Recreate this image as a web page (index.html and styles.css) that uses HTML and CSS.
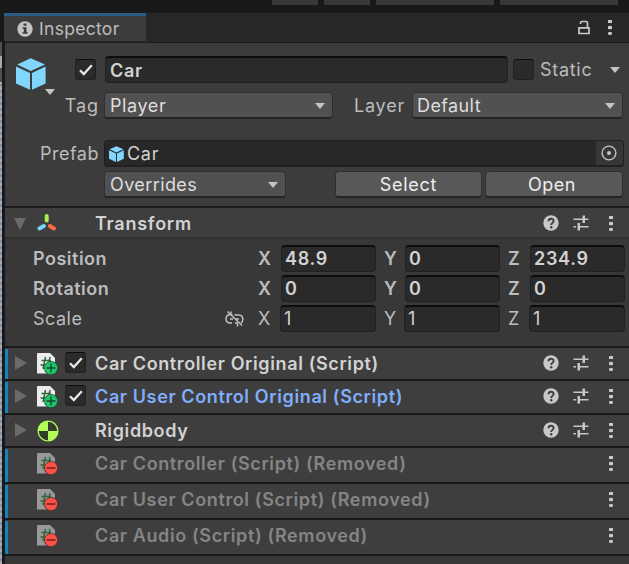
FILE: index.html
```
<!DOCTYPE html>
<html lang="en">
<head>
<meta charset="utf-8">
<title>Inspector</title>
<link rel="stylesheet" href="styles.css">
</head>
<body>
<svg class="defs" aria-hidden="true">
  <defs>
    <symbol id="cube" viewBox="0 0 30 32">
      <path fill="#81d6fd" d="M14.700.3 29 6.500 14.700 13 1.200 6.500z"/>
      <path fill="#81d6fd" d="M0 8.500 14 15V31.800L0 25.500zM29.600 8.500 16 15V31.800L29.600 25.500z"/>
    </symbol>
    <symbol id="dots" viewBox="0 0 4 15"><path fill="#c8c8c8" d="M0 0h4v3H0zM0 6.300Q2 5.300 4 6.300V8.800Q2 9.800 0 8.800zM.5 12h3l.5 1.500-.6 1.500H.6L0 13.500z"/></symbol>
    <symbol id="help" viewBox="0 0 16 16">
      <circle cx="8" cy="8" r="7.700" fill="#c8c8c8"/>
      <path d="M5.500 6.300C5.500 3 10.600 3 10.600 6 10.600 7.900 8.200 7.900 8.200 10" fill="none" stroke="#3e3e3e" stroke-width="1.900"/>
      <circle cx="8.200" cy="12.300" r="1.200" fill="#3e3e3e"/>
    </symbol>
    <symbol id="preset" viewBox="0 0 16 16"><path fill="#c8c8c8" d="M.5 3.500h9V5h-9zM9.500.500h2.500V8H9.500zM12 3.500h3.500V5H12zM.5 11H3v1.500H.5zM4.500 8H7v7.500H4.500zM7 11h8.500v1.500H7z"/></symbol>
    <symbol id="check" viewBox="0 0 14 12"><path d="M1 6.200 4.800 10 12.800 1.200" fill="none" stroke="#e6e6e6" stroke-width="2.300"/></symbol>
    <symbol id="page" viewBox="0 0 21 22">
      <path d="M0 1Q0 0 1 0H13L18 5V20.500H0z" fill="var(--sheet)"/>
      <path d="M8.500 4 6 16M13 4 10.500 16M4.500 7.500H14M3.500 12H14" fill="none" stroke="#33663a" stroke-width="1.500"/>
    </symbol>
  </defs>
</svg>

<div class="window">
  <div class="toolbar"><i></i><i></i><i class="wide"></i><i class="wide"></i></div>
  <div class="scene-edge"></div>
  <main class="inspector">
    <div class="tabbar">
      <div class="tab">
        <svg class="info" viewBox="0 0 16 16"><circle cx="8" cy="8" r="7.700" fill="#c4c4c4"/><path fill="#3c3c3c" d="M6.500 2.500h3v2.300h-3zM5.500 6.200h4v5h1.200v1.600H5.500v-1.600h1.300V7.700H5.500z"/></svg>
        <span>Inspector</span>
      </div>
      <svg class="lock" viewBox="0 0 12 15"><path d="M1 7.800h10v5.700H1zM2.500 4V3Q2.500 1.500 4 1.500H8Q9.500 1.500 9.500 3V8" fill="none" stroke="#c8c8c8" stroke-width="1.700"/></svg>
      <svg class="dots"><use href="#dots"/></svg>
    </div>

    <section class="object">
      <div class="row name-row">
        <div class="object-icon"><svg class="cube"><use href="#cube"/></svg><b class="caret"></b></div>
        <div class="box"><svg><use href="#check"/></svg></div>
        <div class="field name strong">Car</div>
        <div class="box static-box"></div>
        <span class="static">Static</span><b class="caret static-caret"></b>
      </div>
      <div class="row tag-row">
        <span class="label">Tag</span>
        <div class="dropdown tag"><span>Player</span><b class="caret"></b></div>
        <span class="layer-label">Layer</span>
        <div class="dropdown layer"><span>Default</span><b class="caret"></b></div>
      </div>
      <div class="row prefab-row">
        <span class="label">Prefab</span>
        <div class="object-field"><svg class="mini-cube"><use href="#cube"/></svg><span>Car</span>
          <div class="picker"><svg viewBox="0 0 16 16"><circle cx="8" cy="8" r="6.900" fill="none" stroke="#c4c4c4" stroke-width="1.400"/><circle cx="8" cy="8" r="2" fill="#c4c4c4"/></svg></div>
        </div>
      </div>
      <div class="row override-row">
        <div class="dropdown overrides"><span>Overrides</span><b class="caret"></b></div>
        <div class="button select">Select</div>
        <div class="button open">Open</div>
      </div>
    </section>

    <section class="component transform-head">
      <b class="fold down"></b>
      <svg class="axes" viewBox="0 0 20 20"><g fill="none" stroke-width="4" stroke-linecap="round"><path d="M9.700 3V7.500" stroke="#a4f14f"/><path d="M6.800 13 2.500 15.500" stroke="#7bd2fa"/><path d="M12.800 13 17 15.500" stroke="#fb6d42"/></g></svg>
      <h2>Transform</h2>
      <div class="tools"><svg class="help"><use href="#help"/></svg><svg class="preset"><use href="#preset"/></svg><svg class="dots"><use href="#dots"/></svg></div>
    </section>
    <section class="values">
      <div class="vector strong"><span class="prop">Position</span><span class="axis">X</span><div class="field">48.9</div><span class="axis">Y</span><div class="field">0</div><span class="axis">Z</span><div class="field">234.9</div></div>
      <div class="vector strong"><span class="prop">Rotation</span><span class="axis">X</span><div class="field">0</div><span class="axis">Y</span><div class="field">0</div><span class="axis">Z</span><div class="field">0</div></div>
      <div class="vector plain"><span class="prop">Scale</span>
        <svg class="unlink" viewBox="0 0 19 16"><g fill="none" stroke="#c0c0c0" stroke-width="1.500"><path d="M7.500 3.500H5Q1 4 1 8 1 12 5.500 12H7M9.500 4H14Q18 4.500 17.800 8.500 17.600 11 16 12M5 8H8M11 8H14M10 12H13M2.500.500 17 14.500M6 .500V2.500M12.500 13V15.500"/></g></svg>
        <span class="axis">X</span><div class="field">1</div><span class="axis">Y</span><div class="field">1</div><span class="axis">Z</span><div class="field">1</div></div>
    </section>

    <section class="component changed">
      <b class="fold"></b>
      <svg class="script" viewBox="0 0 21 22"><use href="#page"/><circle cx="14" cy="15" r="7" fill="#24553a"/><circle cx="14" cy="15" r="6.200" fill="#1cc86c"/><path d="M9.500 15h9M14 10.500v9" stroke="#154b2b" stroke-width="1.500"/></svg>
      <div class="box"><svg><use href="#check"/></svg></div>
      <h2>Car Controller Original (Script)</h2>
      <div class="tools"><svg class="help"><use href="#help"/></svg><svg class="preset"><use href="#preset"/></svg><svg class="dots"><use href="#dots"/></svg></div>
    </section>
    <section class="component changed user-control">
      <b class="fold"></b>
      <svg class="script" viewBox="0 0 21 22"><use href="#page"/><circle cx="14" cy="15" r="7" fill="#24553a"/><circle cx="14" cy="15" r="6.200" fill="#1cc86c"/><path d="M9.500 15h9M14 10.500v9" stroke="#154b2b" stroke-width="1.500"/></svg>
      <div class="box"><svg><use href="#check"/></svg></div>
      <h2 class="blue">Car User Control Original (Script)</h2>
      <div class="tools"><svg class="help"><use href="#help"/></svg><svg class="preset"><use href="#preset"/></svg><svg class="dots"><use href="#dots"/></svg></div>
    </section>
    <section class="component">
      <b class="fold"></b>
      <svg class="body-icon" viewBox="0 0 22 22"><circle cx="11" cy="11" r="9.900" fill="#353c29" stroke="#b2fb59" stroke-width="1.300"/><path fill="#b2fb59" d="M11 11H1A10 10 0 0 1 11 1zM11 11H21A10 10 0 0 1 11 21z"/></svg>
      <h2>Rigidbody</h2>
      <div class="tools"><svg class="help"><use href="#help"/></svg><svg class="preset"><use href="#preset"/></svg><svg class="dots"><use href="#dots"/></svg></div>
    </section>
    <section class="component changed removed">
      <svg class="script" viewBox="0 0 21 22"><use href="#page"/><circle cx="14" cy="15" r="7" fill="#56302e"/><circle cx="14" cy="15" r="6.200" fill="#fc5147"/><path d="M9.500 15h9" stroke="#6d201c" stroke-width="1.500"/></svg>
      <h2>Car Controller (Script) (Removed)</h2><div class="tools"><svg class="dots"><use href="#dots"/></svg></div>
    </section>
    <section class="component changed removed">
      <svg class="script" viewBox="0 0 21 22"><use href="#page"/><circle cx="14" cy="15" r="7" fill="#56302e"/><circle cx="14" cy="15" r="6.200" fill="#fc5147"/><path d="M9.500 15h9" stroke="#6d201c" stroke-width="1.500"/></svg>
      <h2>Car User Control (Script) (Removed)</h2><div class="tools"><svg class="dots"><use href="#dots"/></svg></div>
    </section>
    <section class="component changed removed">
      <svg class="script" viewBox="0 0 21 22"><use href="#page"/><circle cx="14" cy="15" r="7" fill="#56302e"/><circle cx="14" cy="15" r="6.200" fill="#fc5147"/><path d="M9.500 15h9" stroke="#6d201c" stroke-width="1.500"/></svg>
      <h2>Car Audio (Script) (Removed)</h2><div class="tools"><svg class="dots"><use href="#dots"/></svg></div>
    </section>
  </main>
</div>
</body>
</html>
```
FILE: styles.css
```
* { box-sizing: border-box; }
body { margin: 0; background: #191919; color: #bcbcbc; font: 400 18px/24px Inter, "Liberation Sans", sans-serif; letter-spacing: 0.7px; overflow: hidden; }
svg { display: block; flex: none; }
.defs { position: absolute; width: 0; height: 0; }
h2 { margin: 0; font: inherit; font-weight: 600; letter-spacing: 0.62px; white-space: nowrap; }
span { white-space: nowrap; }

.window { width: 629px; height: 564px; display: grid; grid-template: 13px 551px / 5px 624px; }
.toolbar { grid-column: 1 / -1; display: flex; gap: 6px; padding-left: 272px; }
.toolbar i { width: 46px; height: 5px; background: #383838; }
.toolbar .wide { width: 118px; }
.scene-edge { width: 2px; margin-top: 29px; background: linear-gradient(#505050 14px, #a8a8a8 14px 26px, #505050 26px 40px, transparent 40px), repeating-linear-gradient(#8792a0 0 3px, #a3acb9 3px 6px); }
.inspector { background: #383838; }

.tabbar { height: 30px; background: #282828; border-bottom: 1px solid #1c1c1c; display: flex; align-items: flex-start; }
.tab { width: 142px; height: 28px; margin-left: -1px; padding: 1px 0 0 13px; display: flex; align-items: center; gap: 6px; background: #3c3c3c; border-top: 3px solid #2c5d87; font-size: 17.5px; letter-spacing: 0.3px; }
.info { width: 16px; height: 16px; }
.lock { width: 12px; height: 15px; margin: 7px 18px 0 432px; }
.dots { width: 4px; height: 15px; }
.tabbar .dots { margin-top: 7px; }

.object { height: 163px; padding-top: 13px; background: #3c3c3c; }
.row { display: flex; align-items: center; height: 27px; }
.tag-row { margin-top: 9px; }
.prefab-row { margin-top: 21px; }
.override-row { margin-top: 4px; padding-left: 99px; }
.object-icon { width: 40px; height: 38px; margin: 15px 0 0 11px; position: relative; flex: none; }
.cube { width: 30px; height: 32px; }
.object-icon .caret { position: absolute; left: 29px; top: 31px; }
.caret { width: 0; height: 0; flex: none; border: 5.500px solid transparent; border-top: 6.500px solid #c4c4c4; border-bottom: 0; }
.box { width: 21px; height: 21px; flex: none; display: grid; place-items: center; background: #2a2a2a; border: 1px solid #212121; border-top-color: #0d0d0d; border-radius: 3px; }
.box svg { width: 14px; height: 12px; }
.name-row .box { margin-left: 19px; }
.field { height: 27px; display: flex; align-items: center; background: #2a2a2a; color: #d2d2d2; border: 1px solid #212121; border-top: 2px solid #0d0d0d; border-radius: 4px; padding-left: 4px; }
.name { width: 403px; margin-left: 9px; padding: 1px 0 0 4px; }
.strong, .strong .field { font-weight: 600; }
.name-row .static-box { margin-left: 5px; }
.static { margin-left: 6px; }
.static-caret { margin-left: auto; margin-right: 9px; }
.label { width: 94px; margin-right: 5px; text-align: right; padding-top: 1px; letter-spacing: 0.5px; }
.tag-row .label { letter-spacing: 0.9px; }
.dropdown { height: 27px; display: flex; align-items: center; justify-content: space-between; padding: 2px 7px 0 5px; background: #515151; color: #dedede; border: 1px solid #303030; border-bottom: 2px solid #242424; border-radius: 4px; }
.dropdown span { letter-spacing: 0.6px; }
.tag { width: 229px; }
.layer-label { width: 58px; margin-left: 21px; letter-spacing: 0.8px; padding-top: 1px; }
.layer { width: 211px; padding-left: 4px; }
.layer span { letter-spacing: 0.4px; }
.object-field { width: 520px; height: 27px; display: flex; align-items: center; padding-left: 4px; background: #282828; color: #d2d2d2; border: 1px solid #202020; border-bottom-width: 2px; border-radius: 4px; }
.object-field span { padding-top: 2px; }
.mini-cube { width: 15px; height: 16px; margin: 2px 3px 0 0; }
.picker { width: 27px; height: 24px; margin-left: auto; display: grid; place-items: center; background: #373737; border-radius: 0 3px 3px 0; }
.picker svg { width: 16px; height: 16px; margin-right: 1px; }
.overrides { width: 182px; }
.overrides span { letter-spacing: 0.4px; }
.button { height: 27px; padding-top: 1px; line-height: 24px; text-align: center; background: #585858; color: #eee; border: 1px solid #303030; border-bottom: 2px solid #242424; border-radius: 4px; }
.select { width: 147px; margin-left: 49px; }
.open { width: 138px; margin-left: 3px; padding-right: 4px; letter-spacing: 0.5px; }

.component { height: 33px; display: grid; grid-template-columns: 29px 26px 32px 1fr 76px; align-items: center; background: #3e3e3e; border-top: 2px solid #1a1a1a; color: #d2d2d2; }
.component h2 { grid-area: 1 / 4; padding-left: 3px; }
.component .box { grid-area: 1 / 3; margin: -2px 0 0 5px; }
.component .tools { grid-area: 1 / 5; }
.component > svg { grid-area: 1 / 2; margin-left: 3px; }
.transform-head { border-bottom: 2px solid #303030; }
.transform-head h2 { letter-spacing: 0.75px; padding-top: 2px; }
.user-control { height: 34px; padding-bottom: 1px; }
.changed { background-image: linear-gradient(#1682be, #1682be); background-size: 3px calc(100% - 1px); background-repeat: no-repeat; background-position: 0 1px; }
.fold { width: 0; height: 0; margin: -2px 0 0 10px; border: 7px solid transparent; border-left: 12px solid #6b6b6b; border-right: 0; }
.fold.down { margin: 2px 0 0 9px; border: 6.500px solid transparent; border-top: 12px solid #6b6b6b; border-bottom: 0; }
.axes { width: 20px; height: 20px; }
.script { width: 21px; height: 22px; --sheet: #ececec; }
.body-icon { width: 22px; height: 22px; }
.tools { display: flex; align-items: center; justify-content: flex-end; padding: 0 16px 1px 0; margin-left: -20px; }
.transform-head .tools { padding: 1px 16px 0 0; }
.help { width: 16px; height: 16px; margin-right: 14px; }
.preset { width: 16px; height: 16px; margin-right: 20px; }
.blue { color: #80aefb; }
.removed { height: 36px; padding-bottom: 3px; color: #858585; }
.removed .script { --sheet: #999; }
.removed:last-child { height: 38px; border-bottom: 2px solid #1a1a1a; }

.values { height: 107px; padding: 6px 4px 0 28px; display: flex; flex-direction: column; gap: 3px; }
.vector { height: 27px; display: grid; grid-template-columns: 248px 95px 29px 95px 30px 95px; align-items: center; }
.vector .prop { grid-area: 1 / 1; letter-spacing: 0.5px; padding-top: 1px; }
.vector .axis { padding: 1px 0 0 8px; }
.vector .prop + .axis, .unlink + .axis { grid-area: 1 / 1; justify-self: end; padding-left: 0; width: 23px; }
.vector .field { padding-left: 3px; padding-top: 0; }
.plain .field { margin-left: -1px; }
.unlink { grid-area: 1 / 1; width: 19px; height: 16px; margin-left: 192px; }
```
